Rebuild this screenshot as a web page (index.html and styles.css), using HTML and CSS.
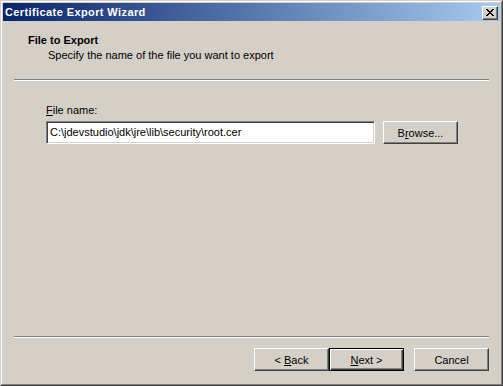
FILE: index.html
```html
<!DOCTYPE html>
<html lang="en">
<head>
  <meta charset="UTF-8">
  <title>Certificate Export Wizard</title>
  <link rel="stylesheet" href="styles.css">
</head>
<body>
  <div class="window">
    <div class="frame">
      <div class="titlebar">
        <span class="title">Certificate Export Wizard</span>
        <button class="close">
          <svg width="8" height="7" viewBox="0 0 8 7"><path d="M0 0h2v1h-2zM6 0h2v1h-2zM1 1h2v1h-2zM5 1h2v1h-2zM2 2h4v1h-4zM3 3h2v1h-2zM2 4h4v1h-4zM1 5h2v1h-2zM5 5h2v1h-2zM0 6h2v1h-2zM6 6h2v1h-2z" fill="#000"/></svg>
        </button>
      </div>

      <div class="header">
        <div class="heading">File to Export</div>
        <div class="subheading">Specify the name of the file you want to export</div>
      </div>
      <div class="separator"></div>

      <div class="content">
        <label class="field-label"><u>F</u>ile name:</label>
        <div class="field-row">
          <div class="textbox">C:\jdevstudio\jdk\jre\lib\security\root.cer</div>
          <button class="btn browse">B<u>r</u>owse...</button>
        </div>
      </div>

      <div class="separator"></div>
      <div class="actions">
        <button class="btn">&lt; <u>B</u>ack</button>
        <button class="btn default"><u>N</u>ext &gt;</button>
        <button class="btn cancel">Cancel</button>
      </div>
    </div>
  </div>
</body>
</html>
```

FILE: styles.css
```css
* {
	box-sizing: border-box;
}

body {
	margin: 0;
	background: #d4d0c8;
	font-family: 'Liberation Sans', Arial, sans-serif;
	font-size: 11px;
	color: #000;
}

.window {
	width: 503px;
	height: 386px;
	border: 1px solid;
	border-color: #d4d0c8 #404040 #404040 #d4d0c8;
}

.frame {
	height: 100%;
	border: 1px solid;
	border-color: #fff #808080 #808080 #fff;
	padding: 1px;
	display: flex;
	flex-direction: column;
}

.titlebar {
	height: 18px;
	flex: none;
	background: linear-gradient(to right, #0a246a, #a6caf0);
	display: flex;
	align-items: center;
	justify-content: space-between;
	padding: 0 2px 0 2px;
}

.title {
	color: #fff;
	font-weight: bold;
	font-size: 11px;
	letter-spacing: 0.4px;
}

.close {
	width: 16px;
	height: 14px;
	padding: 0;
	background: #d4d0c8;
	border: 1px solid;
	border-color: #fff #404040 #404040 #fff;
	box-shadow: inset -1px -1px 0 #808080;
	display: flex;
	align-items: center;
	justify-content: center;
	margin-top: 1px;
}

.close svg {
	display: block;
	margin-left: -1px;
	margin-top: -1px;
}

.header {
	padding: 13px 0 0 25px;
	height: 58px;
	flex: none;
}

.heading {
	font-weight: bold;
	line-height: 13px;
}

.subheading {
	padding-left: 20px;
	margin-top: 2px;
	line-height: 13px;
}

.separator {
	height: 2px;
	flex: none;
	margin: 0 11px 0 11px;
	border-top: 1px solid #808080;
	border-bottom: 1px solid #fff;
}

.content {
	flex: 1;
	padding: 23px 0 0 43px;
}

.field-label {
	display: block;
	line-height: 13px;
}

.field-row {
	display: flex;
	margin-top: 4px;
	gap: 8px;
}

.textbox {
	width: 329px;
	height: 23px;
	background: #fff;
	border: 1px solid;
	border-color: #808080 #fff #fff #808080;
	box-shadow: inset 1px 1px 0 #404040, inset -1px -1px 0 #d4d0c8;
	padding: 4px 0 0 3px;
	line-height: 13px;
	white-space: nowrap;
	overflow: hidden;
}

.btn {
	width: 75px;
	height: 23px;
	padding: 0;
	background: #d4d0c8;
	font-family: inherit;
	font-size: 11px;
	color: #000;
	border: 1px solid;
	border-color: #fff #404040 #404040 #fff;
	box-shadow: inset -1px -1px 0 #808080;
}

.actions {
	flex: none;
	height: 45px;
	display: flex;
	justify-content: flex-end;
	align-items: flex-start;
	padding: 10px 11px 0 0;
}

.btn.default {
	border-color: #000;
	box-shadow: inset 1px 1px 0 #fff, inset -1px -1px 0 #404040, inset -2px -2px 0 #808080;
}

.btn.cancel {
	margin-left: 10px;
}
```
